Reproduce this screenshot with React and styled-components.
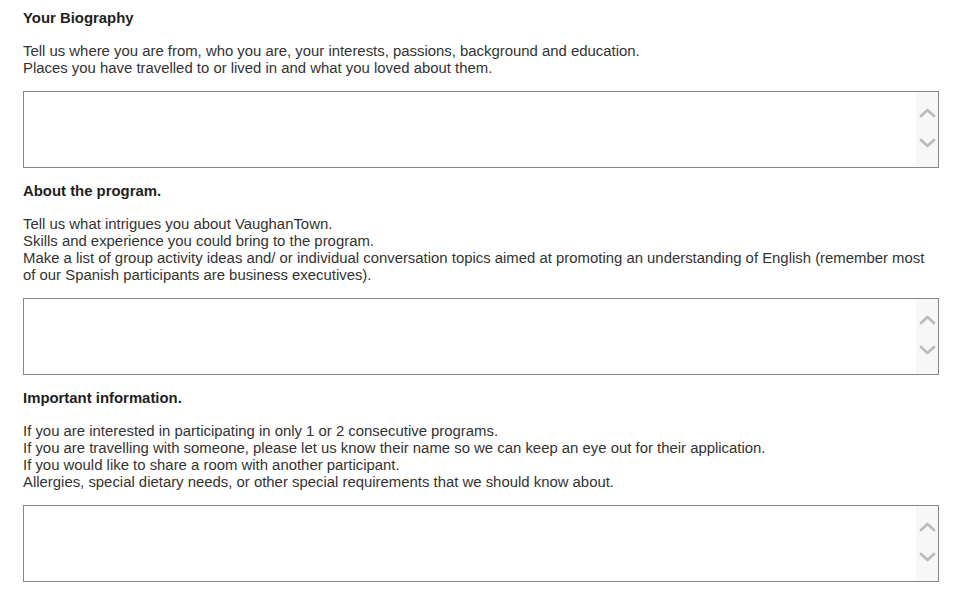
import styled, { createGlobalStyle } from "styled-components"

const Global = createGlobalStyle`
  body {
    margin: 0;
    background: #fff;
    font-family: "Liberation Sans", Arial, sans-serif;
  }
`

const Pagina = styled.div`
  padding: 10px 0 0 23px;
  width: 916px;
`

const Secao = styled.div`
  margin-bottom: 15px;
`

const Titulo = styled.div`
  font-size: 14.9px;
  font-weight: bold;
  line-height: 17px;
  color: #1e1e1e;
  margin-bottom: 16px;
`

const Texto = styled.div`
  font-size: 14.9px;
  line-height: 17px;
  color: #333;
  margin-bottom: 14px;
`

const Caixa = styled.div`
  display: flex;
  height: 75px;
  border: 1px solid #878787;
  background: #fff;
`

const Area = styled.textarea`
  flex: 1;
  border: none;
  outline: none;
  resize: none;
  padding: 4px;
  font-family: inherit;
  font-size: 13px;
  overflow: hidden;
`

const Rolagem = styled.div`
  width: 22px;
  background: #f7f7f7;
  display: flex;
  flex-direction: column;
  align-items: center;
  justify-content: space-between;
  padding: 16px 0 19px;
`

const Seta = ({ baixo }) => (
  <svg width="17" height="10" viewBox="0 0 17 10">
    <polyline
      points={baixo ? "2,2 8.5,8 15,2" : "2,8 8.5,2 15,8"}
      fill="none"
      stroke="#bcbcbc"
      strokeWidth="2.8"
      strokeLinecap="round"
      strokeLinejoin="round"
    />
  </svg>
)

const secoes = [
  {
    titulo: "Your Biography",
    linhas: [
      "Tell us where you are from, who you are, your interests, passions, background and education.",
      "Places you have travelled to or lived in and what you loved about them.",
    ],
  },
  {
    titulo: "About the program.",
    linhas: [
      "Tell us what intrigues you about VaughanTown.",
      "Skills and experience you could bring to the program.",
      "Make a list of group activity ideas and/ or individual conversation topics aimed at promoting an understanding of English (remember most of our Spanish participants are business executives).",
    ],
  },
  {
    titulo: "Important information.",
    linhas: [
      "If you are interested in participating in only 1 or 2 consecutive programs.",
      "If you are travelling with someone, please let us know their name so we can keep an eye out for their application.",
      "If you would like to share a room with another participant.",
      "Allergies, special dietary needs, or other special requirements that we should know about.",
    ],
  },
]

export default function App() {
  return (
    <Pagina>
      <Global />
      {secoes.map((s) => (
        <Secao key={s.titulo}>
          <Titulo>{s.titulo}</Titulo>
          <Texto>
            {s.linhas.map((l) => (
              <div key={l}>{l}</div>
            ))}
          </Texto>
          <Caixa>
            <Area />
            <Rolagem>
              <Seta />
              <Seta baixo />
            </Rolagem>
          </Caixa>
        </Secao>
      ))}
    </Pagina>
  )
}
